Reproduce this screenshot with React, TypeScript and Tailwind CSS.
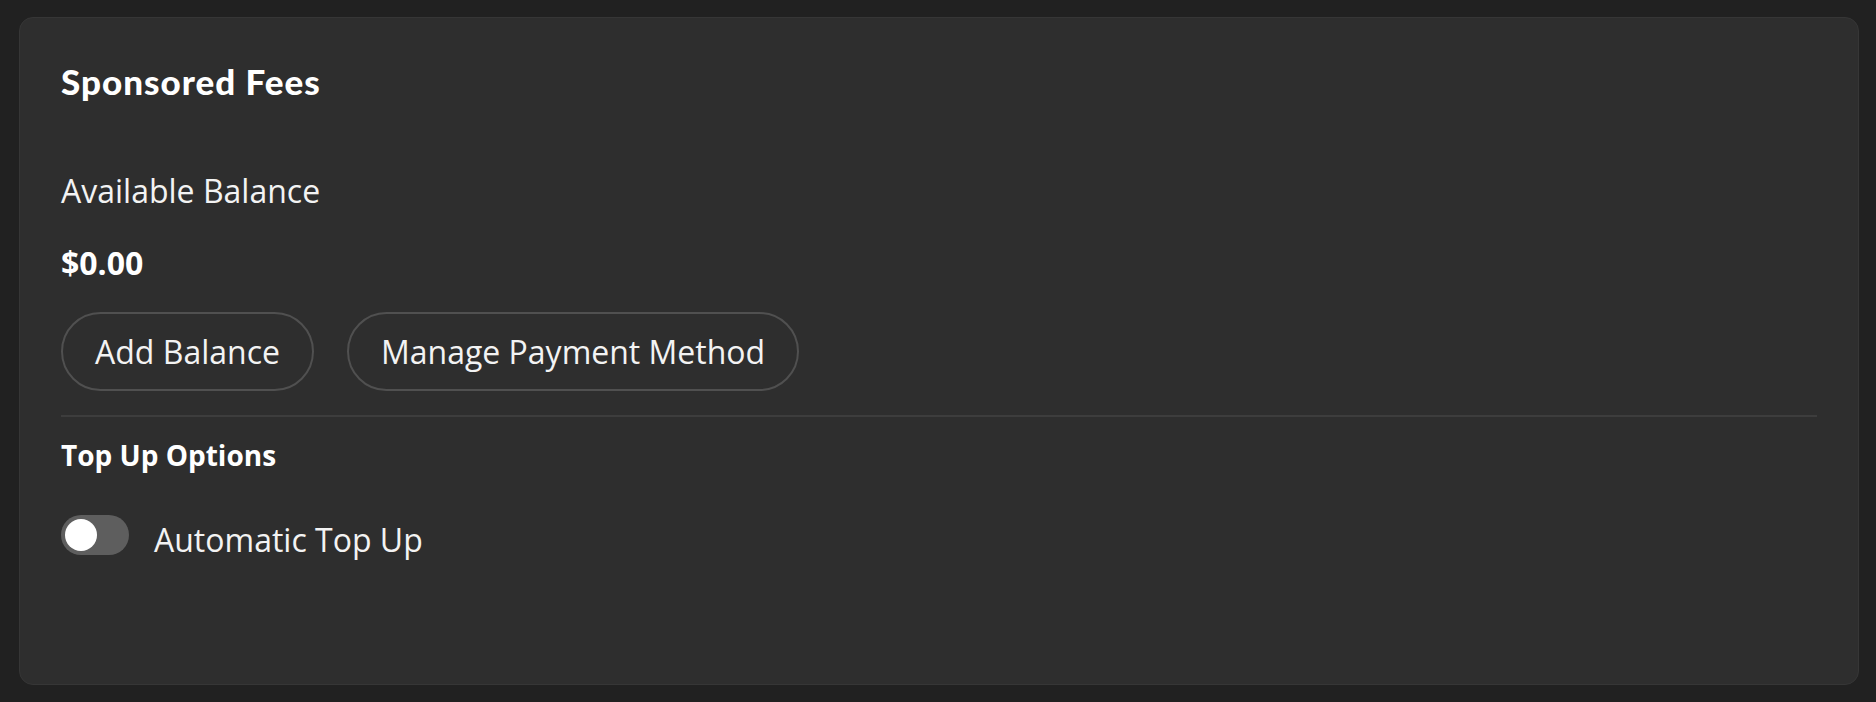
import React from "react";

export default function App() {
  return (
    <div className="h-screen w-full bg-[#212121] pl-[19px] pr-[17px] py-[17px]" style={{ fontFamily: '"Open Sans", "Noto Sans", sans-serif' }}>
      <div className="h-full rounded-[14px] border border-[#363636] bg-[#2e2e2e] px-[41px] pt-[46px] text-[#f3f3f3]">
        <h1 className="text-[35px] font-black leading-none tracking-[1px] text-white" style={{ fontFamily: 'Lato, "Open Sans", sans-serif' }}>
          Sponsored Fees
        </h1>
        <div className="mt-[76px] text-[32px] leading-none">Available Balance</div>
        <div className="mt-[40px] text-[32px] font-bold leading-none text-white">$0.00</div>
        <div className="mt-[33px] flex gap-[33px]">
          <button className="h-[79px] rounded-full border-2 border-[#505050] px-[32px] text-[32px] leading-none text-[#f3f3f3]">
            Add Balance
          </button>
          <button className="h-[79px] rounded-full border-2 border-[#505050] px-[32px] text-[32px] leading-none text-[#f3f3f3]">
            Manage Payment Method
          </button>
        </div>
        <div className="mt-[24px] h-[2px] bg-[#3d3d3d]" />
        <div className="mt-[24px] text-[28px] font-bold leading-none text-white">Top Up Options</div>
        <div className="mt-[46px] flex items-start gap-[25px]">
          <div className="flex h-[40px] w-[68px] items-center rounded-full bg-[#5e5e5e] px-[4px]">
            <div className="h-[32px] w-[32px] rounded-full bg-white" />
          </div>
          <span className="mt-[9px] text-[32px] leading-none">Automatic Top Up</span>
        </div>
      </div>
    </div>
  );
}
